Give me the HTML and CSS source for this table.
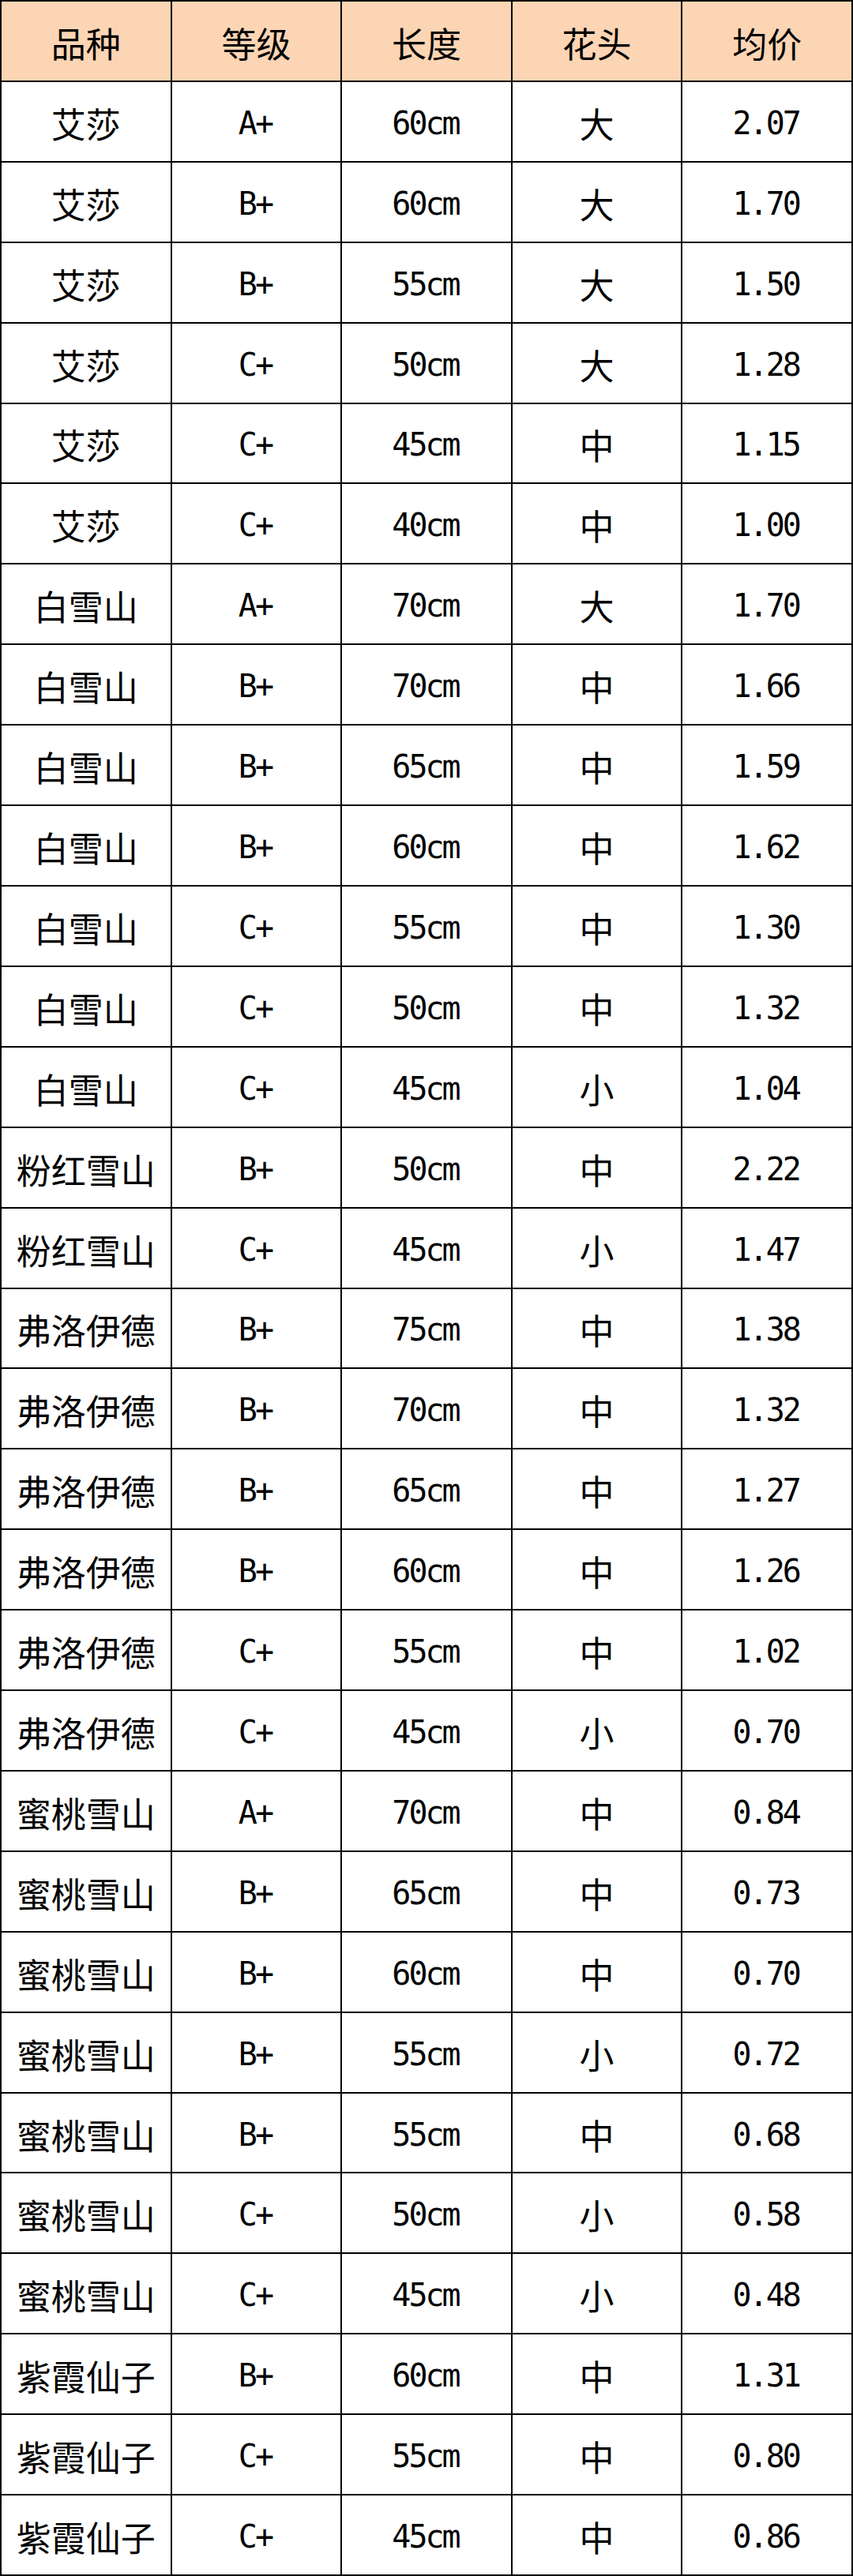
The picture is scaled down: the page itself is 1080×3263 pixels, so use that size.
FILE: index.html
```html
<!DOCTYPE html>
<html lang="zh-CN">
<head>
<meta charset="utf-8">
<title>品种均价</title>
<link rel="stylesheet" href="styles.css">
</head>
<body>
<div class="sheet">
  <div class="cell head cn">品种</div><div class="cell head cn">等级</div><div class="cell head cn">长度</div><div class="cell head cn">花头</div><div class="cell head cn">均价</div>

  <div class="cell cn">艾莎</div><div class="cell num">A+</div><div class="cell num">60cm</div><div class="cell cn">大</div><div class="cell num">2.07</div>
  <div class="cell cn">艾莎</div><div class="cell num">B+</div><div class="cell num">60cm</div><div class="cell cn">大</div><div class="cell num">1.70</div>
  <div class="cell cn">艾莎</div><div class="cell num">B+</div><div class="cell num">55cm</div><div class="cell cn">大</div><div class="cell num">1.50</div>
  <div class="cell cn">艾莎</div><div class="cell num">C+</div><div class="cell num">50cm</div><div class="cell cn">大</div><div class="cell num">1.28</div>
  <div class="cell cn">艾莎</div><div class="cell num">C+</div><div class="cell num">45cm</div><div class="cell cn">中</div><div class="cell num">1.15</div>
  <div class="cell cn">艾莎</div><div class="cell num">C+</div><div class="cell num">40cm</div><div class="cell cn">中</div><div class="cell num">1.00</div>

  <div class="cell cn">白雪山</div><div class="cell num">A+</div><div class="cell num">70cm</div><div class="cell cn">大</div><div class="cell num">1.70</div>
  <div class="cell cn">白雪山</div><div class="cell num">B+</div><div class="cell num">70cm</div><div class="cell cn">中</div><div class="cell num">1.66</div>
  <div class="cell cn">白雪山</div><div class="cell num">B+</div><div class="cell num">65cm</div><div class="cell cn">中</div><div class="cell num">1.59</div>
  <div class="cell cn">白雪山</div><div class="cell num">B+</div><div class="cell num">60cm</div><div class="cell cn">中</div><div class="cell num">1.62</div>
  <div class="cell cn">白雪山</div><div class="cell num">C+</div><div class="cell num">55cm</div><div class="cell cn">中</div><div class="cell num">1.30</div>
  <div class="cell cn">白雪山</div><div class="cell num">C+</div><div class="cell num">50cm</div><div class="cell cn">中</div><div class="cell num">1.32</div>
  <div class="cell cn">白雪山</div><div class="cell num">C+</div><div class="cell num">45cm</div><div class="cell cn">小</div><div class="cell num">1.04</div>

  <div class="cell cn">粉红雪山</div><div class="cell num">B+</div><div class="cell num">50cm</div><div class="cell cn">中</div><div class="cell num">2.22</div>
  <div class="cell cn">粉红雪山</div><div class="cell num">C+</div><div class="cell num">45cm</div><div class="cell cn">小</div><div class="cell num">1.47</div>

  <div class="cell cn">弗洛伊德</div><div class="cell num">B+</div><div class="cell num">75cm</div><div class="cell cn">中</div><div class="cell num">1.38</div>
  <div class="cell cn">弗洛伊德</div><div class="cell num">B+</div><div class="cell num">70cm</div><div class="cell cn">中</div><div class="cell num">1.32</div>
  <div class="cell cn">弗洛伊德</div><div class="cell num">B+</div><div class="cell num">65cm</div><div class="cell cn">中</div><div class="cell num">1.27</div>
  <div class="cell cn">弗洛伊德</div><div class="cell num">B+</div><div class="cell num">60cm</div><div class="cell cn">中</div><div class="cell num">1.26</div>
  <div class="cell cn">弗洛伊德</div><div class="cell num">C+</div><div class="cell num">55cm</div><div class="cell cn">中</div><div class="cell num">1.02</div>
  <div class="cell cn">弗洛伊德</div><div class="cell num">C+</div><div class="cell num">45cm</div><div class="cell cn">小</div><div class="cell num">0.70</div>

  <div class="cell cn">蜜桃雪山</div><div class="cell num">A+</div><div class="cell num">70cm</div><div class="cell cn">中</div><div class="cell num">0.84</div>
  <div class="cell cn">蜜桃雪山</div><div class="cell num">B+</div><div class="cell num">65cm</div><div class="cell cn">中</div><div class="cell num">0.73</div>
  <div class="cell cn">蜜桃雪山</div><div class="cell num">B+</div><div class="cell num">60cm</div><div class="cell cn">中</div><div class="cell num">0.70</div>
  <div class="cell cn">蜜桃雪山</div><div class="cell num">B+</div><div class="cell num">55cm</div><div class="cell cn">小</div><div class="cell num">0.72</div>
  <div class="cell cn">蜜桃雪山</div><div class="cell num">B+</div><div class="cell num">55cm</div><div class="cell cn">中</div><div class="cell num">0.68</div>
  <div class="cell cn">蜜桃雪山</div><div class="cell num">C+</div><div class="cell num">50cm</div><div class="cell cn">小</div><div class="cell num">0.58</div>
  <div class="cell cn">蜜桃雪山</div><div class="cell num">C+</div><div class="cell num">45cm</div><div class="cell cn">小</div><div class="cell num">0.48</div>

  <div class="cell cn">紫霞仙子</div><div class="cell num">B+</div><div class="cell num">60cm</div><div class="cell cn">中</div><div class="cell num">1.31</div>
  <div class="cell cn">紫霞仙子</div><div class="cell num">C+</div><div class="cell num">55cm</div><div class="cell cn">中</div><div class="cell num">0.80</div>
  <div class="cell cn">紫霞仙子</div><div class="cell num">C+</div><div class="cell num">45cm</div><div class="cell cn">中</div><div class="cell num">0.86</div>
</div>
</body>
</html>
```

FILE: styles.css
```css
html, body {
  margin: 0;
  padding: 0;
  background: #ffffff;
}

.sheet {
  box-sizing: border-box;
  width: 1080px;
  height: 3263px;
  display: grid;
  grid-template-columns: repeat(5, 1fr);
  grid-auto-rows: 1fr;
  gap: 2px;
  padding: 2px;
  background: #000000;
}

.cell {
  background: #ffffff;
  display: flex;
  align-items: center;
  justify-content: center;
  color: #000000;
  line-height: 1;
  padding-top: 4px;
  box-sizing: border-box;
}

.cell.head {
  background: #fcd5b4;
}

.cn {
  font-family: "Noto Sans CJK SC", "Noto Sans", sans-serif;
  font-size: 44px;
  font-weight: 400;
}

.num {
  font-family: "DejaVu Sans Mono", "Liberation Mono", monospace;
  font-size: 40px;
  letter-spacing: -3px;
  text-indent: -3px;
}
```
